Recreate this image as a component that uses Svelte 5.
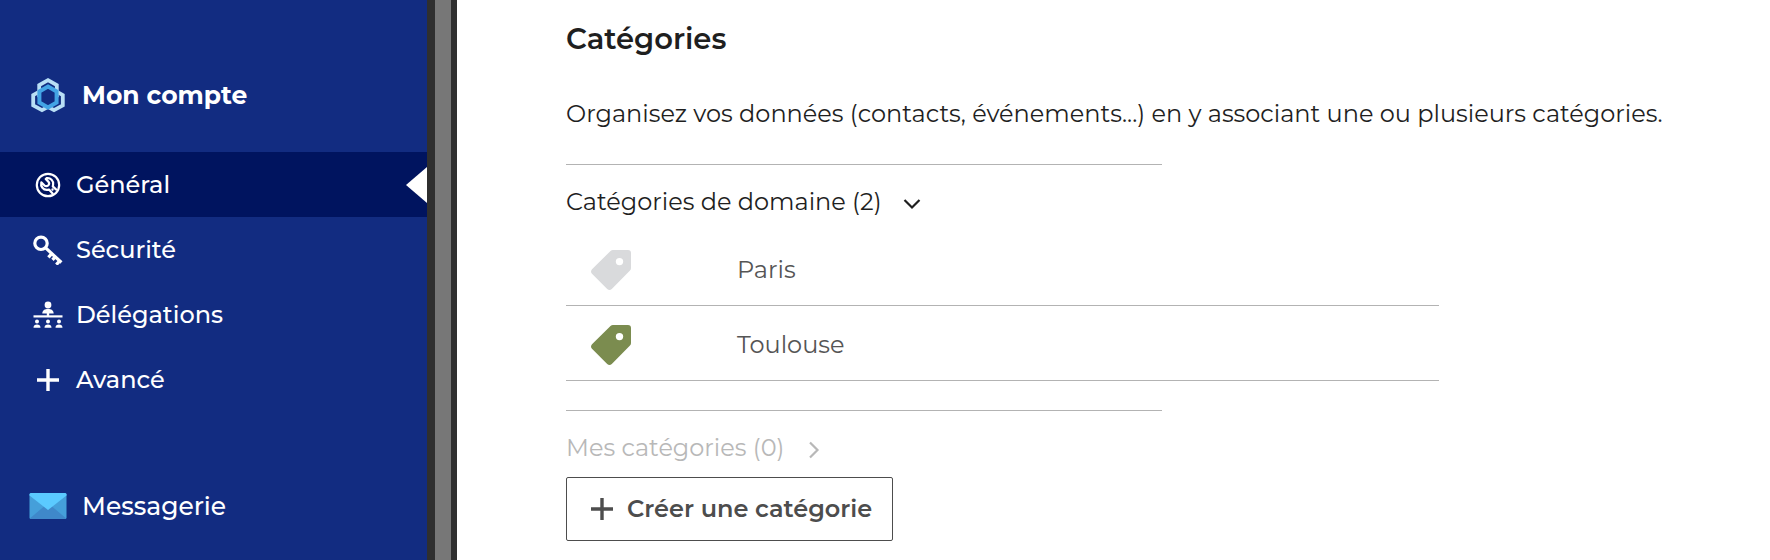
<script lang="ts">
	interface Category {
		name: string
		color: string
	}

	const menu = [
		{ id: 'general', label: 'Général' },
		{ id: 'security', label: 'Sécurité' },
		{ id: 'delegations', label: 'Délégations' },
		{ id: 'advanced', label: 'Avancé' }
	]

	const domainCategories: Category[] = [
		{ name: 'Paris', color: '#d9dadc' },
		{ name: 'Toulouse', color: '#7b8c4f' }
	]

	let current = $state('general')
	let domainOpen = $state(true)
</script>

{#snippet plus()}
	<svg class="icon" viewBox="0 0 30 30" aria-hidden="true">
		<path d="M15 4v22M4 15h22" fill="none" stroke="currentColor" stroke-width="3.4" />
	</svg>
{/snippet}

{#snippet menuIcon(id: string)}
	{#if id === 'general'}
		<svg class="icon" viewBox="0 0 30 30" aria-hidden="true">
			<g fill="none" stroke="currentColor" stroke-width="2.2" stroke-linejoin="round" stroke-linecap="round">
				<circle cx="15" cy="15" r="11.2" />
				<path
					d="M13.6 8.2c3.9-.7 7.200 2.600 6.500 6.500l-.3 1.700 3.200 3M8.300 12.400c-1 4 2 7.800 5.900 7.500l1.800-.3 3.600 4M8.300 12.400l3 2.900c1.400 1.200 3.300 1 4.200-.2.8-1 .7-2.500-.2-3.500l-2.600-2.600.9-.8"
				/>
				<path d="M19.400 19.400l.2.2" />
			</g>
		</svg>
	{:else if id === 'security'}
		<svg class="icon" viewBox="0 0 30 30" aria-hidden="true">
			<g fill="none" stroke="currentColor" stroke-width="3.2">
				<circle cx="8" cy="8.3" r="6.2" />
				<path d="M12.4 12.7l16 14.8" />
				<path d="M19 18.4l-3.600 4M22.400 21.600l-2.900 3.300M27 25.600l-3.700 4" />
			</g>
		</svg>
	{:else if id === 'delegations'}
		<svg class="icon" viewBox="0 0 30 30" aria-hidden="true">
			<g fill="currentColor">
				<circle cx="15" cy="5" r="3.4" />
				<path d="M9.300 13.500c0-3.400 2.500-4.600 5.700-4.600s5.700 1.200 5.700 4.600zM13.800 13h2.400v3h-2.400z" />
				<path d="M.5 15.300h29v2.200h-29z" />
				<circle cx="4" cy="21.5" r="2" />
				<circle cx="15" cy="21.5" r="2" />
				<circle cx="26" cy="21.5" r="2" />
				<path
					d="M.5 27.700c0-2.300 1.400-3.200 3.500-3.200s3.500.9 3.500 3.200zM11.500 27.700c0-2.300 1.400-3.200 3.500-3.200s3.500.9 3.500 3.200zM22.500 27.700c0-2.300 1.400-3.200 3.500-3.200s3.500.9 3.500 3.200z"
				/>
			</g>
		</svg>
	{:else}
		{@render plus()}
	{/if}
{/snippet}

<div class="settings">
	<nav class="sidebar" aria-label="Paramètres">
		<a class="app account" href="#account">
			<svg class="app-icon" viewBox="0 0 38 38" aria-hidden="true">
				<g fill="none" stroke-width="3.8">
					<g stroke="#b9dff5">
						<path d="M19 4.200l8.800 5v10.600L19 24.800l-8.800-5V9.200z" />
						<path d="M13 14.200l8.800 5v10.200L13 34.200l-8.800-4.900V19.200z" />
						<path d="M25 14.200l8.800 5v10.100L25 34.200l-8.800-4.900V19.200z" />
					</g>
					<path d="M19 10.600l8.600 4.900v11L19 31.400l-8.600-4.900v-11z" fill="#122c81" stroke="#43a4e5" stroke-width="4" />
				</g>
			</svg>
			Mon compte
		</a>

		<ul class="menu">
			{#each menu as item}
				<li>
					<a
						href="#{item.id}"
						class="menu-item"
						class:current={current === item.id}
						aria-current={current === item.id ? 'page' : undefined}
						onclick={() => (current = item.id)}
					>
						{@render menuIcon(item.id)}
						{item.label}
					</a>
				</li>
			{/each}
		</ul>

		<a class="app mail" href="#mail">
			<svg class="app-icon" viewBox="0 0 38 38" aria-hidden="true">
				<rect x=".5" y="6" width="37" height="26" rx="1.5" fill="#459fda" />
				<path d="M1 31.300L15 19.500h8l14 11.800-1 .7H2z" fill="#3f88ca" />
				<path d="M.5 8.500V7.500Q.5 6 2 6h34q1.500 0 1.500 1.500v1L19 23z" fill="#5bcaff" />
			</svg>
			Messagerie
		</a>
	</nav>

	<div class="gutter"></div>

	<main class="content">
		<h1>Catégories</h1>
		<p>Organisez vos données (contacts, événements...) en y associant une ou plusieurs catégories.</p>

		<section>
			<hr />
			<button class="toggle" aria-expanded={domainOpen} onclick={() => (domainOpen = !domainOpen)}>
				Catégories de domaine ({domainCategories.length})
				<svg class="chevron" class:open={domainOpen} viewBox="0 0 20 20" aria-hidden="true">
					<path d="M6 2.500l7.500 7.500L6 17.500" />
				</svg>
			</button>
			{#if domainOpen}
				<ul class="categories">
					{#each domainCategories as category}
						<li>
							<svg class="tag" viewBox="0 0 40 40" aria-hidden="true">
								<path
									fill={category.color}
									fill-rule="evenodd"
									d="M22 0h15q3 0 3 3v15q0 1.500-1 2.500L20.800 39q-2.300 2-4.600 0L1 23.800q-2-2.300 0-4.600L19.500 1q1-1 2.500-1zM28.500 7.900a3.700 3.700 0 1 0 0 7.400 3.700 3.700 0 0 0 0-7.400z"
								/>
							</svg>
							{category.name}
						</li>
					{/each}
				</ul>
			{/if}
		</section>

		<section>
			<hr />
			<button class="toggle" disabled>
				Mes catégories (0)
				<svg class="chevron" viewBox="0 0 20 20" aria-hidden="true">
					<path d="M6 2.500l7.500 7.500L6 17.500" />
				</svg>
			</button>
		</section>

		<button class="create">
			{@render plus()}
			Créer une catégorie
		</button>
	</main>
</div>

<style>
	:global(body) {
		margin: 0;
	}

	.settings {
		display: flex;
		min-height: 100vh;
		box-sizing: border-box;
		font-family: Montserrat, Inter, sans-serif;
		font-size: 24px;
		line-height: 32px;
		color: #1f1f1f;
		background: #fff;
	}

	ul {
		list-style: none;
		margin: 0;
		padding: 0;
	}

	button {
		font: inherit;
		color: inherit;
		background: none;
		border: 0;
		padding: 0;
		cursor: pointer;
	}

	.sidebar {
		flex: 0 0 427px;
		padding-top: 38px;
		font-weight: 500;
		color: #fff;
		background: #122c81;
	}

	.sidebar a {
		display: flex;
		align-items: center;
		color: inherit;
		text-decoration: none;
	}

	.app {
		height: 114px;
		padding-left: 29px;
		gap: 15px;
		font-size: 25px;
	}

	.account {
		font-weight: 700;
	}

	.mail {
		margin-top: 37px;
	}

	.app-icon {
		width: 38px;
		height: 38px;
	}

	.icon {
		width: 30px;
		height: 30px;
	}

	.menu-item {
		position: relative;
		height: 65px;
		padding-left: 33px;
		gap: 13px;
	}

	.menu-item.current {
		background: #00145f;
	}

	.menu-item.current::after {
		content: '';
		position: absolute;
		right: 0;
		border: solid transparent;
		border-width: 18px 21px 18px 0;
		border-right-color: #fff;
	}

	.gutter {
		flex: 0 0 16px;
		background: #777;
		border-left: 8px solid #2f2f2f;
		border-right: 6px solid #2f2f2f;
	}

	.content {
		flex: 1;
		padding: 21px 24px 18px 109px;
	}

	h1 {
		margin: 0;
		font-size: 29px;
		font-weight: 600;
		line-height: 36px;
	}

	p {
		margin: 41px 0 34px;
	}

	hr {
		max-width: 596px;
		margin: 0;
		border: 0;
		border-top: 1px solid #b3b3b3;
	}

	.toggle {
		display: flex;
		align-items: center;
		gap: 20px;
		margin-top: 21px;
	}

	.toggle:disabled {
		color: #b8b8b8;
		cursor: default;
	}

	.chevron {
		width: 20px;
		height: 20px;
		margin-top: 4px;
		fill: none;
		stroke: currentColor;
		stroke-width: 2.2;
	}

	.chevron.open {
		transform: rotate(90deg);
	}

	.categories {
		max-width: 873px;
		margin: 13px 0 29px;
		color: #555;
	}

	.categories li {
		display: flex;
		align-items: center;
		gap: 106px;
		height: 71px;
		padding: 3px 0 0 25px;
		border-bottom: 1px solid #b3b3b3;
	}

	.tag {
		width: 40px;
		height: 40px;
	}

	.create {
		display: flex;
		align-items: center;
		gap: 10px;
		margin-top: 13px;
		padding: 15px 20px;
		font-weight: 600;
		color: #4d4d4d;
		border: 1px solid #4d4d4d;
		border-radius: 2px;
	}
</style>
